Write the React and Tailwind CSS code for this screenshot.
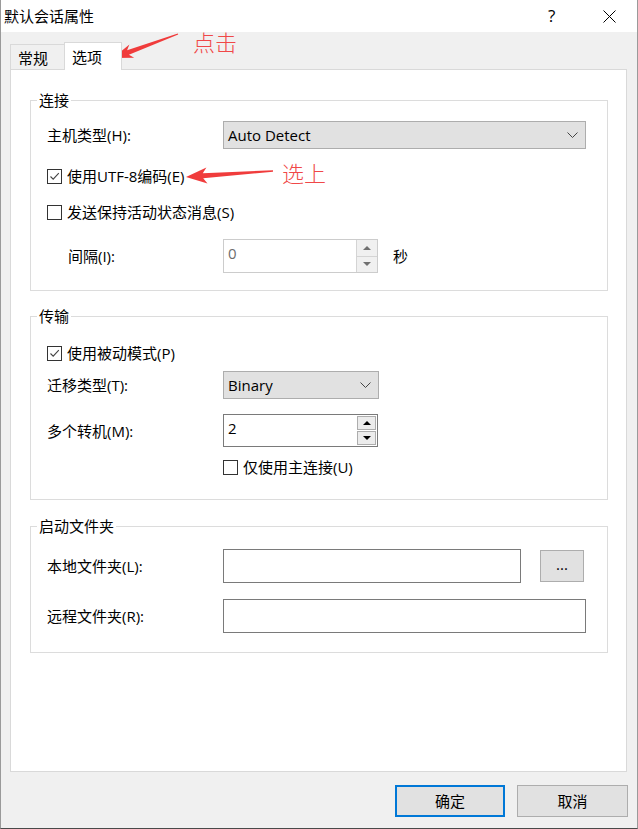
import React from "react";

const ui = "font-['Open_Sans','Noto_Sans_CJK_SC',sans-serif] text-[15px] leading-[20px] text-black";

function CheckBox({ checked }) {
  return (
    <span className="flex h-[15px] w-[15px] shrink-0 items-center justify-center border border-[#333] bg-white">
      {checked && (
        <svg width="13" height="13" viewBox="0 0 13 13" fill="none">
          <path d="M2.5 6.5 L5.2 9.2 L10.8 3.2" stroke="#444" strokeWidth="1.1" />
        </svg>
      )}
    </span>
  );
}

function CheckRow({ checked, label, className = "" }) {
  return (
    <div className={`flex h-[20px] items-center gap-[5px] ${className}`}>
      <CheckBox checked={checked} />
      <span>{label}</span>
    </div>
  );
}

function Chevron() {
  return (
    <svg width="11" height="6" viewBox="0 0 11 6" fill="none">
      <path d="M0.5 0.5 L5.5 5.5 L10.5 0.5" stroke="#444" strokeWidth="1" />
    </svg>
  );
}

function Select({ value, width }) {
  return (
    <div className={`flex h-[28px] ${width} items-center justify-between border border-[#adadad] bg-[#e1e1e1] pl-[4px] pr-[7px]`}>
      <span>{value}</span>
      <Chevron />
    </div>
  );
}

function Tri({ up, color }) {
  return (
    <svg width="8" height="4" viewBox="0 0 8 4">
      <polygon points={up ? "0,4 4,0 8,4" : "0,0 8,0 4,4"} fill={color} />
    </svg>
  );
}

function Group({ title, className = "", children }) {
  return (
    <fieldset className={`border border-[#dcdcdc] ${className}`}>
      <legend className="ml-[6px] px-[2px] leading-[20px]">{title}</legend>
      {children}
    </fieldset>
  );
}

function Arrows() {
  return (
    <svg className="pointer-events-none absolute left-0 top-0" width="638" height="829" viewBox="0 0 638 829">
      <polygon
        points="176.8,33.4 126.1,50.2 128.4,44.5 112,58 133.2,57.7 127.9,54.8 177.2,34.6"
        fill="#f03c3c"
      />
      <polygon
        points="272,170.3 201.8,173.3 205.4,167.6 185,177 206.5,183.5 202.2,178.3 272,171.7"
        fill="#f03c3c"
      />
    </svg>
  );
}

export default function App() {
  return (
    <div className={`${ui} relative flex h-[829px] w-[638px] flex-col border-x border-b border-x-[#9a9a9a] border-b-[#4a4a4a] bg-[#f0f0f0]`}>
      {/* title bar */}
      <div className="flex h-[32px] shrink-0 items-center bg-white pl-[3px]">
        <span className="flex-1">默认会话属性</span>
        <span className="w-[20px] text-[17px]">?</span>
        <span className="ml-[34px] mr-[21px] flex w-[14px] items-center justify-center">
          <svg width="13" height="13" viewBox="0 0 13 13" fill="none">
            <path d="M0.5 0.5 L12.5 12.5 M12.5 0.5 L0.5 12.5" stroke="#000" strokeWidth="1" />
          </svg>
        </span>
      </div>

      <div className="flex flex-1 flex-col pb-[11px] pl-[9px] pr-[10px] pt-[10px]">
        {/* tabs */}
        <div className="flex h-[27px] items-end">
          <div className="flex h-[25px] w-[54px] items-center border-l border-t border-[#d9d9d9] pl-[7px] pt-[2px]">常规</div>
          <div className="relative z-10 -mb-px flex h-[28px] w-[58px] items-center border-x border-t border-[#d9d9d9] bg-white pl-[7px]">
            选项
          </div>
        </div>

        {/* panel */}
        <div className="flex flex-1 flex-col border border-[#d9d9d9] bg-white pl-[19px] pr-[18px] pt-[20px]">
          <Group title="连接">
            <div className="pb-[17px] pl-[16px] pt-[11px]">
              <div className="flex h-[28px] items-center">
                <span className="w-[176px]">主机类型(H):</span>
                <Select value="Auto Detect" width="w-[363px]" />
              </div>
              <CheckRow checked label="使用UTF-8编码(E)" className="mt-[17px]" />
              <CheckRow label="发送保持活动状态消息(S)" className="mt-[16px]" />
              <div className="mt-[17px] flex h-[34px] items-center">
                <span className="w-[176px] pl-[21px]">间隔(I):</span>
                <div className="flex h-[34px] w-[155px] border border-[#cccccc] bg-white">
                  <span className="flex-1 pl-[4px] pt-[3px] text-[#6d6d6d]">0</span>
                  <div className="flex w-[21px] flex-col border-l border-[#d4d4d4] bg-[#f0f0f0]">
                    <div className="flex flex-1 items-center justify-center border-b border-[#d4d4d4]">
                      <Tri up color="#707070" />
                    </div>
                    <div className="flex flex-1 items-center justify-center">
                      <Tri color="#707070" />
                    </div>
                  </div>
                </div>
                <span className="ml-[15px]">秒</span>
              </div>
            </div>
          </Group>

          <Group title="传输" className="mt-[15px]">
            <div className="pb-[22px] pl-[16px] pt-[17px]">
              <CheckRow checked label="使用被动模式(P)" />
              <div className="mt-[8px] flex h-[28px] items-center">
                <span className="w-[176px]">迁移类型(T):</span>
                <Select value="Binary" width="w-[156px]" />
              </div>
              <div className="mt-[15px] flex h-[33px] items-center">
                <span className="w-[176px]">多个转机(M):</span>
                <div className="flex h-[33px] w-[155px] border border-[#7a7a7a] bg-white">
                  <span className="flex-1 pl-[4px] pt-[3px]">2</span>
                  <div className="flex w-[20px] flex-col gap-[1px] p-[1px] pl-0">
                    <div className="flex flex-1 items-center justify-center border border-[#adadad] bg-[#ececec]">
                      <Tri up color="#000" />
                    </div>
                    <div className="flex flex-1 items-center justify-center border border-[#adadad] bg-[#ececec]">
                      <Tri color="#000" />
                    </div>
                  </div>
                </div>
              </div>
              <CheckRow label="仅使用主连接(U)" className="ml-[176px] mt-[10px]" />
            </div>
          </Group>

          <Group title="启动文件夹" className="mt-[16px]">
            <div className="pb-[19px] pl-[16px] pt-[13px]">
              <div className="flex h-[34px] items-center">
                <span className="w-[176px]">本地文件夹(L):</span>
                <div className="h-[34px] w-[298px] border border-[#7a7a7a] bg-white" />
                <div className="ml-[19px] flex h-[32px] w-[44px] items-center justify-center border border-[#adadad] bg-[#e1e1e1] pb-[4px]">
                  ...
                </div>
              </div>
              <div className="mt-[16px] flex h-[34px] items-center">
                <span className="w-[176px]">远程文件夹(R):</span>
                <div className="h-[34px] w-[363px] border border-[#7a7a7a] bg-white" />
              </div>
            </div>
          </Group>
        </div>

        {/* buttons */}
        <div className="mt-[13px] flex justify-end gap-[12px]">
          <button className="flex h-[32px] w-[110px] items-center justify-center border-2 border-[#0078d7] bg-[#e1e1e1]">
            确定
          </button>
          <button className="-mr-px flex h-[32px] w-[111px] items-center justify-center border border-[#adadad] bg-[#e1e1e1]">
            取消
          </button>
        </div>
      </div>

      <Arrows />
      <span className="pointer-events-none absolute left-[192px] top-[28px] font-['Noto_Sans_CJK_SC',sans-serif] text-[22px] font-light leading-[26px] text-[#f04848]">
        点击
      </span>
      <span className="pointer-events-none absolute left-[281px] top-[159px] font-['Noto_Sans_CJK_SC',sans-serif] text-[22px] font-light leading-[26px] text-[#f04848]">
        选上
      </span>
    </div>
  );
}
